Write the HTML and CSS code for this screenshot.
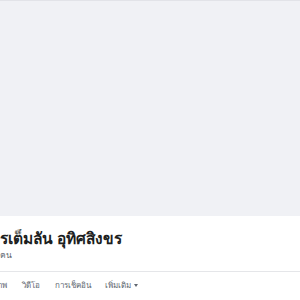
FILE: index.html
```html
<html>
    <head>
        <meta name="viewport" content="width=device-width, initial-scale=1">
        <link rel="stylesheet" href="styles.css">
    </head>
    <body>
        <div class='cover'></div>
        <div class='profile'>
            <div class='name'>การเต็มลัน อุทิศสิงขร</div>
            <div class='followers'>คน</div>
        </div>
        <div class='tabs'>
            <span class='tab first'>รูปภาพ</span>
            <span class='tab'>วิดีโอ</span>
            <span class='tab'>การเช็คอิน</span>
            <span class='tab more'>เพิ่มเติม <span class='caret'></span></span>
        </div>
    </body>
</html>
```
FILE: styles.css
```css
body {
    margin: 0;
    font-family: "Liberation Sans", Arial, sans-serif;
    background: white;
    overflow: hidden;
    width: 300px;
    height: 300px;
}
.cover {
    height: 215px;
    background: #f0f1f5;
    border-top: 1px solid #e2e3e8;
}
.profile {
    padding-top: 13px;
    height: 42px;
    border-bottom: 1px solid #e5e6e9;
    overflow: hidden;
    white-space: nowrap;
}
.name {
    font-size: 15.5px;
    font-weight: bold;
    color: #1c1e21;
    line-height: 20px;
    margin-left: -18px;
}
.followers {
    font-size: 8.5px;
    color: #606770;
    line-height: 12px;
    margin-top: 0;
}
.tabs {
    display: flex;
    gap: 15px;
    padding-top: 7px;
    margin-left: -16px;
    white-space: nowrap;
}
.tab {
    font-size: 8px;
    color: #606770;
}
.more {
    margin-left: -1px;
}
.caret {
    display: inline-block;
    border-left: 2px solid transparent;
    border-right: 2px solid transparent;
    border-top: 3px solid #606770;
    vertical-align: middle;
    margin-left: 1px;
}
```
